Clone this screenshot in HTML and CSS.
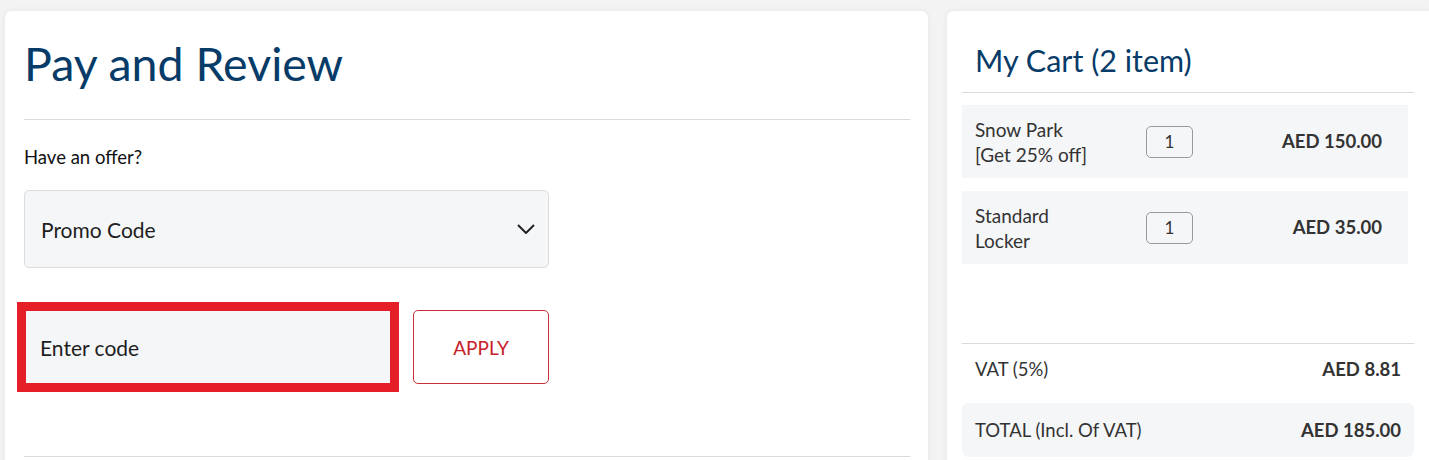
FILE: index.html
```html
<!DOCTYPE html>
<html lang="en">
<head>
<meta charset="utf-8">
<title>Pay and Review</title>
<link rel="stylesheet" href="styles.css">
</head>
<body>
<div class="page">
  <section class="card main">
    <h1 class="title">Pay and Review</h1>
    <div class="divider"></div>
    <p class="offer-label">Have an offer?</p>
    <div class="select">
      <span class="select-text">Promo Code</span>
      <svg class="chevron" width="18" height="10" viewBox="0 0 18 10"><path d="M1 1 L9 9 L17 1" fill="none" stroke="#222" stroke-width="2"/></svg>
    </div>
    <div class="code-row">
      <div class="code-input">Enter code</div>
      <button class="apply">APPLY</button>
    </div>
    <div class="divider bottom"></div>
  </section>
  <aside class="card cart">
    <h2 class="cart-title">My Cart (2 item)</h2>
    <div class="divider"></div>
    <div class="items">
      <div class="item">
        <div class="item-name">Snow Park<br>[Get 25% off]</div>
        <div class="qty">1</div>
        <div class="price">AED 150.00</div>
      </div>
      <div class="item">
        <div class="item-name">Standard<br>Locker</div>
        <div class="qty">1</div>
        <div class="price">AED 35.00</div>
      </div>
    </div>
    <div class="divider summary-divider"></div>
    <div class="sum-row">
      <span>VAT (5%)</span>
      <span class="price">AED 8.81</span>
    </div>
    <div class="sum-row total">
      <span>TOTAL (Incl. Of VAT)</span>
      <span class="price">AED 185.00</span>
    </div>
  </aside>
</div>
</body>
</html>
```
FILE: styles.css
```css
html, body {
  margin: 0;
  padding: 0;
}
body {
  background: #f3f3f3;
  font-family: Lato, "Open Sans", sans-serif;
  color: #222;
  overflow: hidden;
  height: 460px;
}
.page {
  display: flex;
  gap: 19px;
  padding: 11px 0 0 5px;
  width: 1500px;
}
.card {
  background: #fff;
  border-radius: 7px;
  box-shadow: 0 0 6px rgba(0, 0, 0, 0.06);
  box-sizing: border-box;
  height: 520px;
}
.main {
  width: 923px;
  flex: none;
  padding: 0 18px 0 19px;
}
.title {
  margin: 0;
  padding-top: 24px;
  height: 84px;
  font-size: 46.5px;
  line-height: 56px;
  font-weight: 400;
  color: #073b68;
}
.divider {
  height: 1px;
  background: #dadada;
}
.offer-label {
  margin: 25px 0 0;
  font-size: 18.5px;
  line-height: 24px;
  color: #111;
}
.select {
  margin-top: 21px;
  width: 525px;
  height: 78px;
  box-sizing: border-box;
  border: 1px solid #dcdcdc;
  border-radius: 5px;
  background: #f5f6f8;
  display: flex;
  align-items: center;
  justify-content: space-between;
  padding: 0 13px 0 16px;
}
.select-text {
  font-size: 21px;
  color: #1e1e1e;
}
.code-row {
  margin-top: 42px;
  display: flex;
  align-items: center;
  gap: 23px;
  width: 525px;
}
.code-input {
  margin-left: 2px;
  width: 364px;
  height: 72px;
  box-sizing: border-box;
  background: #f5f6f8;
  outline: 9px solid #e61e28;
  display: flex;
  align-items: center;
  padding-left: 14px;
  font-size: 21px;
  color: #1e1e1e;
}
.apply {
  width: 136px;
  height: 74px;
  box-sizing: border-box;
  background: #fff;
  border: 1px solid #c8303a;
  border-radius: 5px;
  color: #c8202a;
  font-family: inherit;
  font-size: 19px;
  padding: 0;
}
.divider.bottom {
  margin-top: 72px;
}
.cart {
  width: 490px;
  flex: none;
  padding: 0 0 0 15px;
}
.cart .divider {
  width: 452px;
}
.cart-title {
  margin: 0;
  padding: 29px 0 0 13px;
  height: 52px;
  font-size: 30.5px;
  line-height: 40px;
  font-weight: 400;
  color: #073b68;
}
.items {
  margin-top: 12px;
  display: flex;
  flex-direction: column;
  gap: 13px;
  width: 446px;
}
.item {
  height: 73px;
  background: #f5f6f8;
  display: grid;
  grid-template-columns: 171px 47px 1fr;
  align-items: center;
  padding: 0 26px 0 13px;
  font-size: 19px;
  line-height: 25px;
  color: #333;
}
.qty {
  height: 32px;
  box-sizing: border-box;
  border: 1px solid #999;
  border-radius: 5px;
  display: flex;
  align-items: center;
  justify-content: center;
  font-size: 17px;
  background: #f5f6f8;
}
.item .price {
  font-size: 18.5px;
}
.price {
  text-align: right;
  font-weight: 700;
  color: #333;
}
.summary-divider {
  margin-top: 79px;
}
.sum-row {
  width: 452px;
  box-sizing: border-box;
  display: flex;
  justify-content: space-between;
  align-items: center;
  padding: 0 13px;
  height: 50px;
  font-size: 18.5px;
  color: #333;
  margin-bottom: 9px;
}
.sum-row.total {
  height: 54px;
  background: #f5f6f8;
  border-radius: 6px;
  margin: 0;
}
```
